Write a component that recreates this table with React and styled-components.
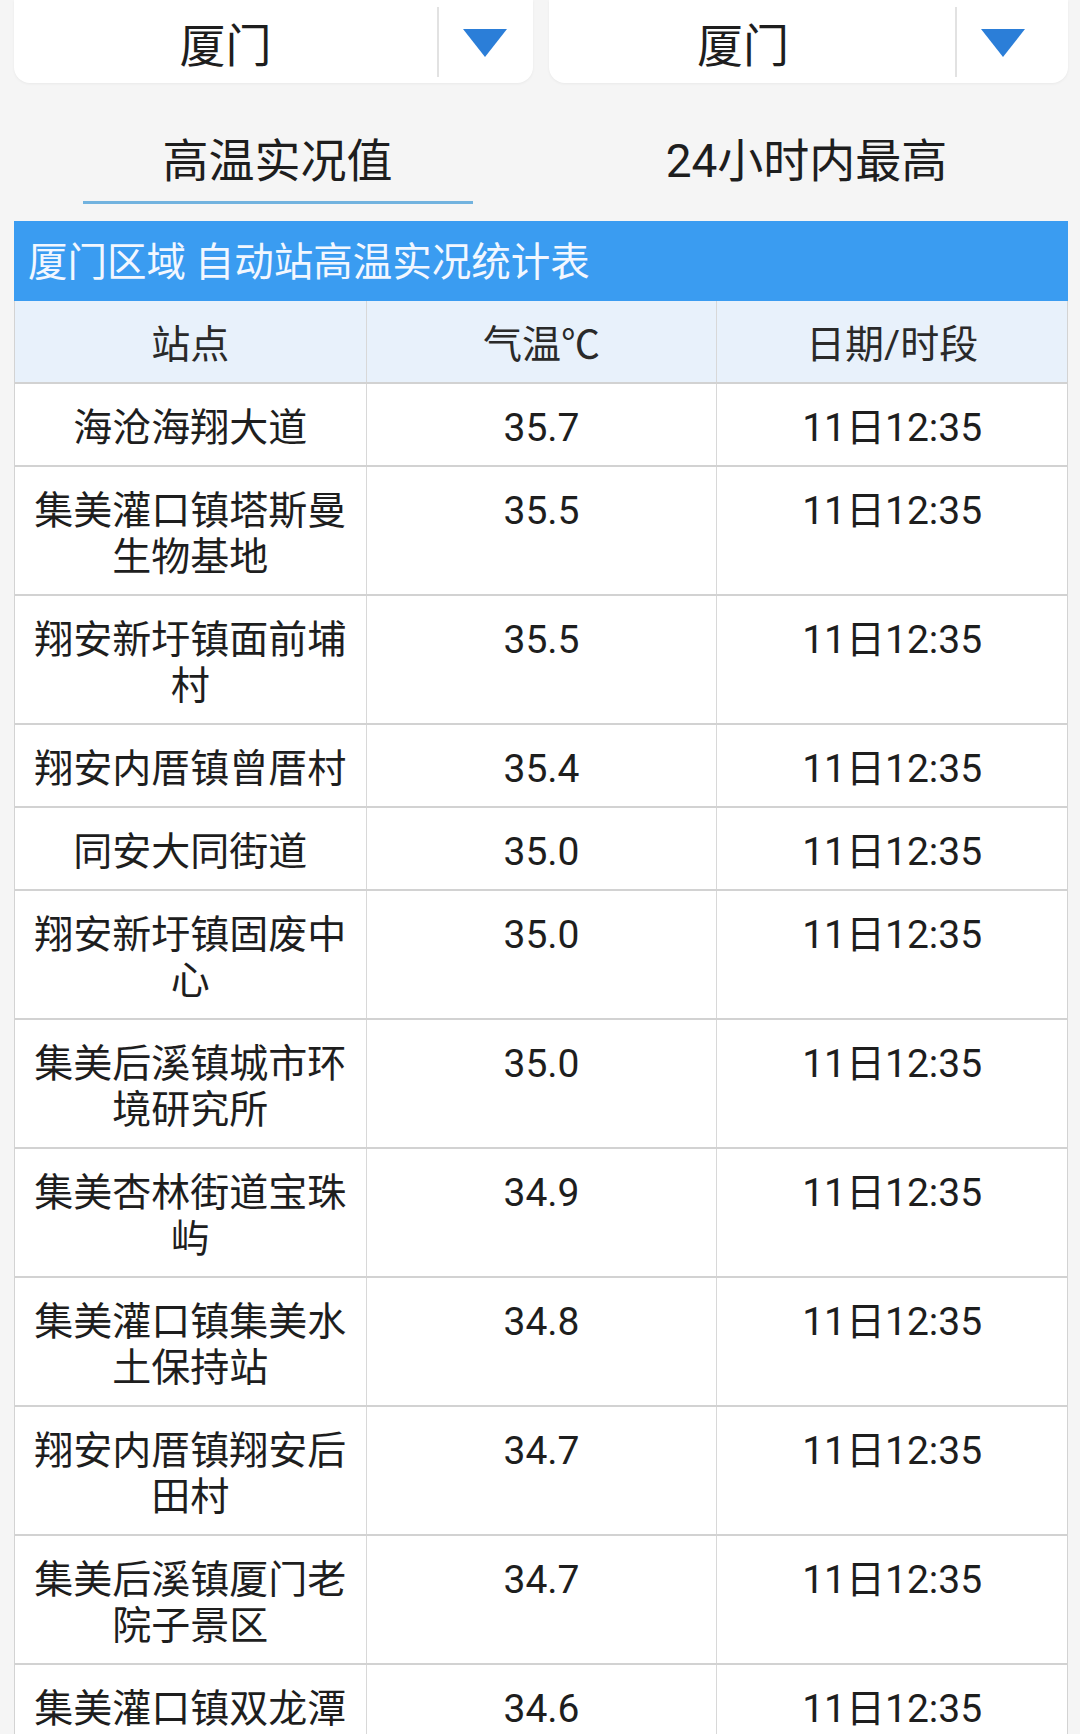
import React from "react";
import styled, { createGlobalStyle } from "styled-components";

const GlobalStyle = createGlobalStyle`
  html, body {
    margin: 0;
    padding: 0;
    height: 1734px;
    overflow: hidden;
    background: #f5f5f5;
  }
  body {
    font-family: Roboto, "Noto Sans CJK SC", sans-serif;
    color: #222;
  }
`;

const Page = styled.div`
  padding: 0 12px 0 14px;
  display: flex;
  flex-direction: column;
`;

const SelectRow = styled.div`
  display: flex;
  gap: 16px;
`;

const Select = styled.div`
  flex: 1;
  height: 83px;
  background: #fff;
  border-radius: 0 0 16px 16px;
  box-shadow: 0 1px 3px rgba(0, 0, 0, 0.05);
  display: flex;
  align-items: center;
`;

const SelectLabel = styled.div`
  width: ${(p) => p.$w}px;
  padding-right: ${(p) => p.$pr || 0}px;
  box-sizing: border-box;
  text-align: center;
  font-family: "Noto Sans CJK SC", sans-serif;
  font-size: 46px;
  line-height: 46px;
  color: #1e1e1e;
`;

const Divider = styled.div`
  width: 2px;
  height: 70px;
  background: #e2e2e2;
`;

const ArrowArea = styled.div`
  flex: 1;
  display: flex;
  align-items: center;
  padding-left: 24px;
  padding-top: 3px;
`;

const Tabs = styled.div`
  display: grid;
  grid-template-columns: 1fr 1fr;
  height: 138px;
`;

const Tab = styled.div`
  display: flex;
  flex-direction: column;
  align-items: center;
`;

const TabText = styled.div`
  margin-top: 55px;
  font-family: Roboto, "Noto Sans CJK SC", sans-serif;
  font-size: 46px;
  line-height: 46px;
  color: #1e1e1e;
  margin-left: ${(p) => p.$ml || 0}px;
`;

const TabLine = styled.div`
  margin-top: 17px;
  width: 390px;
  height: 3px;
  background: ${(p) => (p.$active ? "#72b3df" : "transparent")};
`;

const TitleBar = styled.div`
  height: 80px;
  background: #3a9cf1;
  color: #f2f7ff;
  font-family: "Noto Sans CJK SC", sans-serif;
  font-size: 39.5px;
  line-height: 76px;
  padding-left: 14px;
  box-sizing: border-box;
  white-space: pre;
`;

const Grid = styled.div`
  border-left: 1px solid #d3d3d3;
  border-right: 1px solid #d3d3d3;
`;

const Row = styled.div`
  display: grid;
  grid-template-columns: repeat(3, 1fr);
  border-bottom: 2px solid #d2d2d2;
  background: ${(p) => (p.$head ? "#e8f1fb" : "#fff")};
`;

const Cell = styled.div`
  border-left: ${(p) => (p.$first ? "none" : "1px solid #d8d8d8")};
  padding: ${(p) => (p.$head ? "21px 10px 14px" : "21px 10px 14px")};
  text-align: center;
  font-size: 39px;
  line-height: 46px;
  color: ${(p) => (p.$head ? "#2a2a2a" : "#1e1e1e")};
  min-width: 0;
`;

const Arrow = () => (
  <svg width="44" height="28" viewBox="0 0 44 28">
    <polygon points="0,0 44,0 22,28" fill="#2b7ed8" />
  </svg>
);

const rows = [
  ["海沧海翔大道", "35.7"],
  ["集美灌口镇塔斯曼生物基地", "35.5"],
  ["翔安新圩镇面前埔村", "35.5"],
  ["翔安内厝镇曾厝村", "35.4"],
  ["同安大同街道", "35.0"],
  ["翔安新圩镇固废中心", "35.0"],
  ["集美后溪镇城市环境研究所", "35.0"],
  ["集美杏林街道宝珠屿", "34.9"],
  ["集美灌口镇集美水土保持站", "34.8"],
  ["翔安内厝镇翔安后田村", "34.7"],
  ["集美后溪镇厦门老院子景区", "34.7"],
  ["集美灌口镇双龙潭公园", "34.6"],
];

export default function App() {
  return (
    <>
      <GlobalStyle />
      <Page>
        <SelectRow>
          <Select>
            <SelectLabel $w={423}>厦门</SelectLabel>
            <Divider />
            <ArrowArea>
              <Arrow />
            </ArrowArea>
          </Select>
          <Select>
            <SelectLabel $w={406} $pr={18}>厦门</SelectLabel>
            <Divider />
            <ArrowArea>
              <Arrow />
            </ArrowArea>
          </Select>
        </SelectRow>
        <Tabs>
          <Tab>
            <TabText>高温实况值</TabText>
            <TabLine $active />
          </Tab>
          <Tab>
            <TabText $ml={4}>24小时内最高</TabText>
            <TabLine />
          </Tab>
        </Tabs>
        <TitleBar>{"厦门区域 自动站高温实况统计表"}</TitleBar>
        <Grid>
          <Row $head>
            <Cell $head $first>站点</Cell>
            <Cell $head>气温℃</Cell>
            <Cell $head>日期/时段</Cell>
          </Row>
          {rows.map(([name, temp]) => (
            <Row key={name}>
              <Cell $first>{name}</Cell>
              <Cell>{temp}</Cell>
              <Cell>11日12:35</Cell>
            </Row>
          ))}
        </Grid>
      </Page>
    </>
  );
}
